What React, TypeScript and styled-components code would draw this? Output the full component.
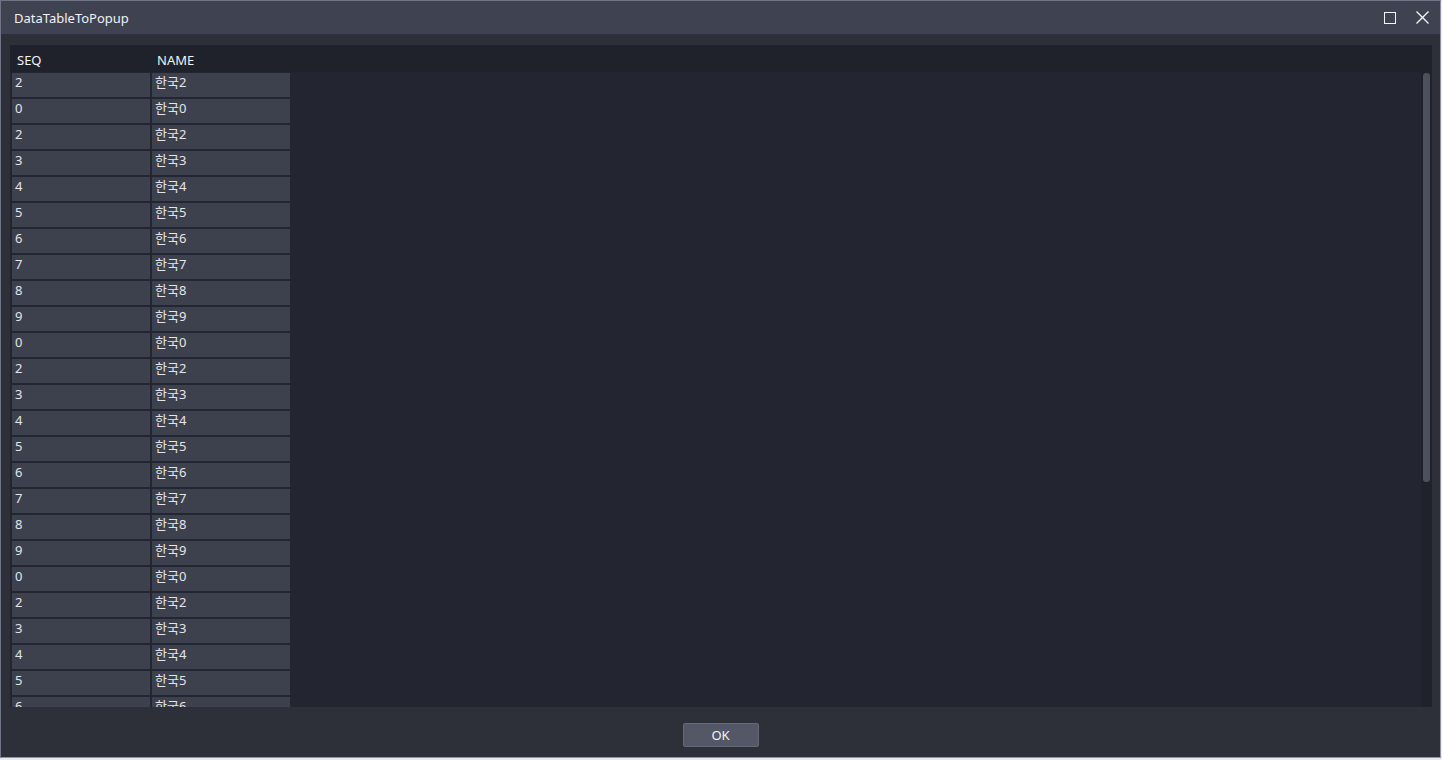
import React from "react";
import styled, { createGlobalStyle } from "styled-components";

const GlobalStyle = createGlobalStyle`
  html, body {
    margin: 0;
    padding: 0;
    background: #e9eaee;
    overflow: hidden;
  }
`;

const font = `"Noto Sans", "Noto Sans CJK KR", sans-serif`;

const Window = styled.div`
  width: 1439px;
  height: 756px;
  border: 1px solid #6f7588;
  border-right-color: #8d94aa;
  border-bottom-color: #8d94aa;
  background: #2d3039;
  display: flex;
  flex-direction: column;
  font-family: ${font};
  color: #e6e7ea;
`;

const TitleBar = styled.div`
  height: 33px;
  background: #3f4251;
  display: flex;
  align-items: center;
  padding: 0 2px 0 13px;
  flex-shrink: 0;
`;

const Title = styled.div`
  flex: 1;
  font-size: 13px;
  color: #f0f1f4;
`;

const TitleButton = styled.button`
  width: 32px;
  height: 24px;
  border: none;
  background: transparent;
  padding: 0;
  display: flex;
  align-items: center;
  justify-content: center;
  cursor: pointer;
`;

const Body = styled.div`
  flex: 1;
  padding: 11px 8px 0 9px;
  display: flex;
  flex-direction: column;
  min-height: 0;
`;

const Table = styled.div`
  flex: 1;
  min-height: 0;
  background: #232630;
  display: flex;
  overflow: hidden;
`;

const TableMain = styled.div`
  flex: 1;
  display: flex;
  flex-direction: column;
  min-width: 0;
`;

const HeaderRow = styled.div`
  height: 27px;
  background: #1f222a;
  display: flex;
  align-items: center;
  flex-shrink: 0;
  font-size: 13px;
  color: #f2f3f5;
`;

const HeaderCell = styled.div`
  width: 140px;
  padding-left: 7px;
  box-sizing: border-box;
  padding-top: 3px;
`;

const Rows = styled.div`
  flex: 1;
  overflow: hidden;
  padding: 1px 0 0 2px;
`;

const Row = styled.div`
  display: flex;
  gap: 2px;
  margin-bottom: 2px;
`;

const Cell = styled.div`
  width: 138px;
  height: 24px;
  background: #3d404d;
  font-size: 13px;
  line-height: 18px;
  padding-left: 3px;
  box-sizing: border-box;
  color: #e4e5e9;
`;

const ScrollTrack = styled.div`
  width: 11px;
  background: #1f222a;
  display: flex;
  flex-direction: column;
  padding-top: 28px;
  align-items: center;
  flex-shrink: 0;
`;

const ScrollThumb = styled.div`
  width: 7px;
  height: 409px;
  background: #4c505c;
  border-radius: 3px;
`;

const Footer = styled.div`
  height: 50px;
  flex-shrink: 0;
  display: flex;
  align-items: center;
  justify-content: center;
`;

const OkButton = styled.button`
  width: 76px;
  height: 24px;
  background: #535766;
  border: 1px solid #646878;
  border-radius: 2px;
  color: #f2f3f5;
  font-family: ${font};
  font-size: 13px;
  padding: 0;
  margin-top: 6px;
`;

const seqs = [2, 0, 2, 3, 4, 5, 6, 7, 8, 9, 0, 2, 3, 4, 5, 6, 7, 8, 9, 0, 2, 3, 4, 5, 6, 7, 8, 9];

export default function App() {
  return (
    <>
      <GlobalStyle />
      <Window>
        <TitleBar>
          <Title>DataTableToPopup</Title>
          <TitleButton aria-label="maximize">
            <svg width="12" height="12" viewBox="0 0 12 12">
              <rect x="0.5" y="0.5" width="11" height="11" fill="none" stroke="#f4f5f7" strokeWidth="1" />
            </svg>
          </TitleButton>
          <TitleButton aria-label="close">
            <svg width="13" height="13" viewBox="0 0 13 13">
              <path d="M0.5 0.5 L12.5 12.5 M12.5 0.5 L0.5 12.5" stroke="#f4f5f7" strokeWidth="1.4" />
            </svg>
          </TitleButton>
        </TitleBar>
        <Body>
          <Table>
            <TableMain>
              <HeaderRow>
                <HeaderCell>SEQ</HeaderCell>
                <HeaderCell>NAME</HeaderCell>
              </HeaderRow>
              <Rows>
                {seqs.map((s, i) => (
                  <Row key={i}>
                    <Cell>{s}</Cell>
                    <Cell>한국{s}</Cell>
                  </Row>
                ))}
              </Rows>
            </TableMain>
            <ScrollTrack>
              <ScrollThumb />
            </ScrollTrack>
          </Table>
        </Body>
        <Footer>
          <OkButton>OK</OkButton>
        </Footer>
      </Window>
    </>
  );
}
